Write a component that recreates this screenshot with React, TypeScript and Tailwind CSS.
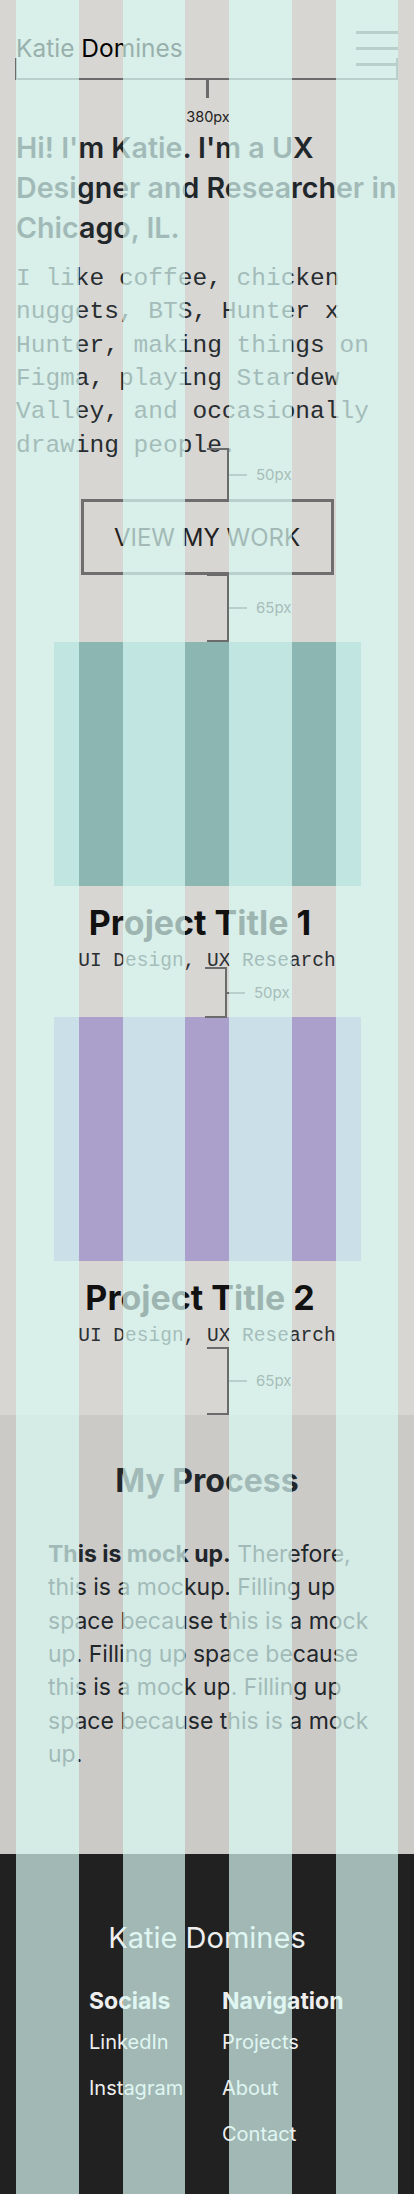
const SANS = "font-['Inter','Noto_Sans',sans-serif]"
const MONO = "font-['Liberation_Mono','DejaVu_Sans_Mono',monospace]"

const PROCESS_LINES = [
  'this is a mockup. Filling up',
  'space because this is a mock',
  'up. Filling up space because',
  'this is a mock up. Filling up',
  'space because this is a mock',
  'up.',
]

function Bracket({ className, label }: { className: string; label: string }) {
  return (
    <div className={`absolute w-[22px] border-y-2 border-r-2 border-[#6b6b6b] ${className}`}>
      <div className="absolute left-full top-1/2 -translate-y-1/2 flex items-center">
        <span className="ml-[1px] w-[19px] h-[2px] bg-[#6b6b6b]" />
        <span className={`ml-[9px] text-[15px] leading-[20px] text-[#2c2c2c] ${SANS}`}>{label}</span>
      </div>
    </div>
  )
}

function Project({ color, title }: { color: string; title: string }) {
  return (
    <div className="flex flex-col items-center">
      <div className={`w-[307px] h-[244px] ${color}`} />
      <h3 className={`mt-[17px] mr-[14px] text-[34px] leading-[40px] font-bold text-[#111] ${SANS}`}>{title}</h3>
      <p className={`mt-[4px] text-[19.5px] leading-[28px] text-[#2a2f33] ${MONO}`}>UI Design, UX Research</p>
    </div>
  )
}

export default function App() {
  return (
    <div className={`relative w-[414px] h-[2194px] overflow-hidden bg-[#d8d6d2] ${SANS}`}>
      {/* header */}
      <header className="flex items-start justify-between px-4 pt-[31px]">
        <span className="mt-[1px] text-[24.5px] leading-[32px] text-black">Katie Domines</span>
        <div className="flex flex-col gap-[13px] w-[42px]">
          <span className="h-[3px] bg-[#6b6b6b]" />
          <span className="h-[3px] bg-[#6b6b6b]" />
          <span className="h-[3px] bg-[#6b6b6b]" />
        </div>
      </header>

      {/* hero */}
      <section className="px-4">
        <h1 className="mt-[62px] text-[28.6px] leading-[40px] font-semibold text-[#21262b] whitespace-nowrap">
          Hi! I'm Katie. I'm a UX
          <br />
          Designer and Researcher in
          <br />
          Chicago, IL.
        </h1>
        <p className={`mt-[14px] text-[24.5px] leading-[33.33px] text-[#272c30] ${MONO}`}>
          I like coffee, chicken nuggets, BTS, Hunter x Hunter, making things on Figma, playing Stardew Valley, and
          occasionally drawing people.
        </p>
        <div className="mt-[37px] flex justify-center">
          <button className="w-[253px] h-[76px] border-[3px] border-[#6e6e6e] flex items-center justify-center pt-[2px] text-[24px] leading-[32px] text-[#222]">
            VIEW MY WORK
          </button>
        </div>
      </section>

      {/* projects */}
      <section className="mt-[67px] flex flex-col gap-[42px]">
        <Project color="bg-[#8bb6b1]" title="Project Title 1" />
        <Project color="bg-[#aba0cc]" title="Project Title 2" />
      </section>

      {/* process */}
      <section className="mt-[65px] h-[439px] bg-[#cccac6] pt-[46px]">
        <h2 className="text-center text-[32px] leading-[40px] font-bold text-[#21262b]">My Process</h2>
        <p className="mt-[37px] px-[48px] text-[23px] leading-[33.33px] text-[#21262b] whitespace-nowrap">
          <span className="font-bold">This is mock up.</span> Therefore,
          {PROCESS_LINES.map((l) => (
            <span key={l} className="block">
              {l}
            </span>
          ))}
        </p>
      </section>

      {/* footer */}
      <footer className="h-[340px] bg-[#212121] pt-[66px] text-[#eeeeee]">
        <p className="text-center text-[29px] leading-[36px]">Katie Domines</p>
        <div className="mt-[30px] flex pl-[89px]">
          <div className="w-[133px] flex flex-col">
            <span className="text-[23px] leading-[30px] font-bold">Socials</span>
            <div className="mt-[12px] flex flex-col gap-[18px] text-[20px] leading-[28px]">
              <span>LinkedIn</span>
              <span>Instagram</span>
            </div>
          </div>
          <div className="flex flex-col">
            <span className="text-[23px] leading-[30px] font-bold">Navigation</span>
            <div className="mt-[12px] flex flex-col gap-[18px] text-[20px] leading-[28px]">
              <span>Projects</span>
              <span>About</span>
              <span>Contact</span>
            </div>
          </div>
        </div>
      </footer>

      {/* redline annotations */}
      <div className="pointer-events-none absolute left-[15px] top-[58px] w-[383px] h-[22px] border-x-2 border-b-2 border-[#6b6b6b]">
        <span className="absolute left-[189px] top-full w-[3px] h-[20px] bg-[#6b6b6b]" />
        <span className="absolute left-[163px] top-[49px] w-[56px] text-center text-[14.5px] leading-[20px] text-[#222]">
          380px
        </span>
      </div>
      <Bracket className="left-[207px] top-[448px] h-[53px]" label="50px" />
      <Bracket className="left-[207px] top-[574px] h-[68px]" label="65px" />
      <Bracket className="left-[205px] top-[967px] h-[51px]" label="50px" />
      <Bracket className="left-[207px] top-[1347px] h-[68px]" label="65px" />

      {/* layout grid overlay */}
      <div className="pointer-events-none absolute inset-0 grid grid-cols-4 gap-[44px] px-4">
        <div className="bg-[rgba(216,250,244,0.7)]" />
        <div className="bg-[rgba(216,250,244,0.7)]" />
        <div className="bg-[rgba(216,250,244,0.7)]" />
        <div className="bg-[rgba(216,250,244,0.7)]" />
      </div>
    </div>
  )
}
